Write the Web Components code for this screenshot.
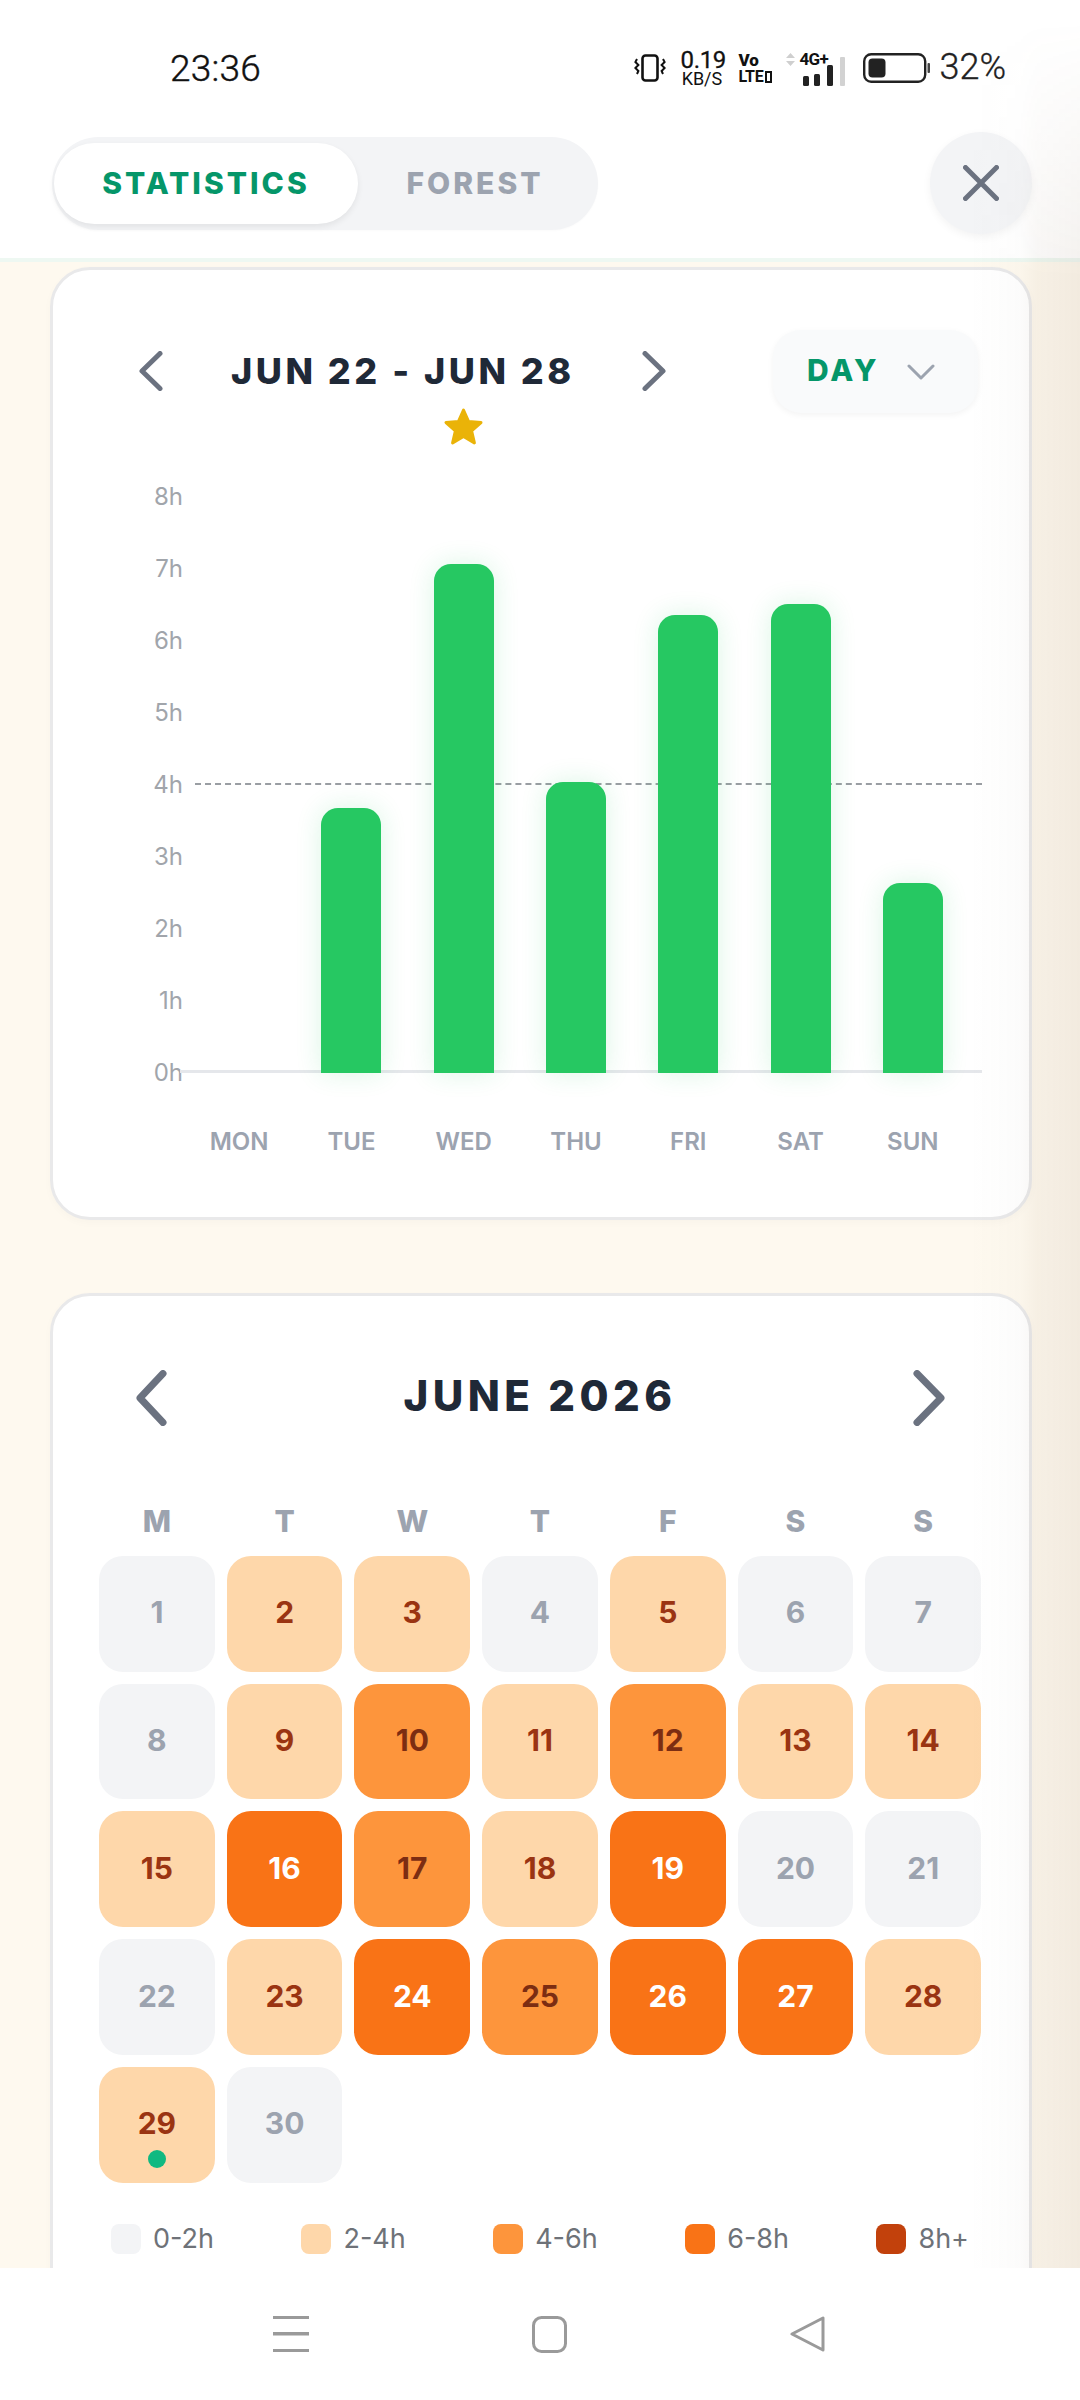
<!DOCTYPE html>
<html lang="en"><head><meta charset="utf-8"><title>Statistics</title>
<style>
html,body{margin:0;padding:0;background:#fff}
body{font-family:Inter,"Liberation Sans",sans-serif}
</style></head>
<body>
<app-shell>
  <status-bar slot="top"></status-bar>
  <top-tabs slot="top"></top-tabs>
  <stat-card><week-chart></week-chart></stat-card>
  <stat-card gap><month-calendar></month-calendar></stat-card>
  <nav-bar slot="bottom"></nav-bar>
</app-shell>
<script>
function def(name, css, html, init){
  customElements.define(name, class extends HTMLElement{
    connectedCallback(){
      if(this.shadowRoot) return;
      const r=this.attachShadow({mode:'open'});
      const h=typeof html==='function'?html(this):html;
      r.innerHTML='<style>'+css+'</style>'+h;
      if(init) init(r,this);
    }
  });
}
const chev=(dir,w,h,sw)=>`<svg width="${w}" height="${h}" viewBox="0 0 ${w} ${h}" fill="none" stroke="#6b7280" stroke-width="${sw}" stroke-linecap="round" stroke-linejoin="round"><path d="${dir==='l'?`M${w-sw/2-.5} ${sw/2}L${sw/2+.5} ${h/2}L${w-sw/2-.5} ${h-sw/2}`:`M${sw/2+.5} ${sw/2}L${w-sw/2-.5} ${h/2}L${sw/2+.5} ${h-sw/2}`}"/></svg>`;

def('app-shell',`
:host{display:block;width:1080px;height:2400px;position:relative;overflow:hidden;background:#fff}
.wrap{display:flex;flex-direction:column;height:2400px}
header{background:#fff;border-bottom:4px solid #eef8f2;height:258px;flex:none}
main{flex:1;min-height:0;overflow:hidden;background:#fef9ef;padding:5px 48px 0 50px}
.shade{position:absolute;top:0;right:0;width:110px;height:2268px;pointer-events:none;
 background:linear-gradient(to right,rgba(120,110,100,0) 0,rgba(120,110,100,.025) 45%,rgba(120,90,60,.06) 62%,rgba(120,90,60,.085) 100%);
 -webkit-mask-image:linear-gradient(to bottom,transparent 20px,#000 280px);mask-image:linear-gradient(to bottom,transparent 20px,#000 280px)}
footer{flex:none}
`,`<div class="wrap"><header><slot name="top"></slot></header><main><slot></slot></main><footer><slot name="bottom"></slot></footer></div><div class="shade"></div>`);

def('status-bar',`
:host{display:flex;height:130px;box-sizing:border-box;padding:0 74px 0 170px;justify-content:space-between;align-items:flex-start;color:#111;font-family:Roboto,"Liberation Sans",sans-serif}
.time{font-size:37px;line-height:40px;margin-top:49px;letter-spacing:.2px;font-weight:300;-webkit-text-stroke:.4px #111}
.r{display:flex;align-items:flex-start;margin-top:49px}
svg{display:block}
.net{margin-left:14px;width:43px;text-align:center}
.net b{display:block;font-weight:400;font-size:24px;line-height:22px;letter-spacing:-.3px;-webkit-text-stroke:.3px #111}
.net i{display:block;font-style:normal;font-weight:400;font-size:18px;line-height:16px;letter-spacing:-.1px}
.vo{margin-left:15px;width:34px;font-weight:700;margin-top:3px}
.vo b{display:block;font-size:17px;line-height:17px}
.vo span{display:flex;align-items:center;gap:2px;font-weight:700;font-size:16px;line-height:15px;letter-spacing:-.3px}
.vo span u{display:block;width:7px;height:12px;border:2.500px solid #111;box-sizing:border-box}
.sig{margin-left:14px;position:relative;width:59px;height:33px;margin-top:4px}
.sig b{position:absolute;left:13px;top:-3px;font-size:17px;line-height:18px;font-weight:700;letter-spacing:-.6px}
.bat{margin-left:18px;margin-top:4px}
.pct{margin-left:9px;font-size:36px;line-height:38px;color:#222;font-weight:300;margin-top:-1px;-webkit-text-stroke:.3px #222}
`,`<span class="time">23:36</span>
<div class="r">
<svg width="32" height="28" viewBox="0 0 32 28" style="margin-top:5px" fill="none" stroke="#111"><rect x="8.500" y="1.500" width="15" height="25" rx="3" stroke-width="2.600"/><path d="M3 5l-1.600 3 3 3-3 3 3 3-1.400 3M29 5l1.600 3-3 3 3 3-3 3 1.400 3" stroke-width="2"/></svg>
<div class="net"><b>0.19</b><i>KB/S</i></div>
<div class="vo"><b>Vo</b><span>LTE<u></u></span></div>
<div class="sig"><svg width="59" height="33" viewBox="0 0 59 33" style="position:absolute;left:0;top:0"><path d="M4.500 0l4.500 5H0zM4.500 13l4.500-5H0z" fill="#cfcfcf"/><rect x="17" y="23" width="6" height="10" rx="1.500" fill="#222"/><rect x="28" y="21" width="6" height="12" rx="1.500" fill="#222"/><rect x="41" y="12" width="6" height="21" rx="1.500" fill="#222"/><rect x="54" y="4" width="5" height="29" rx="1" fill="#d2d2d2"/></svg><b>4G+</b></div>
<svg class="bat" width="67" height="30" viewBox="0 0 67 30" fill="none"><rect x="1.200" y="1.200" width="61" height="27.600" rx="7" stroke="#222" stroke-width="2.400"/><rect x="5.500" y="5.500" width="17" height="19" rx="4" fill="#222"/><rect x="64.500" y="10" width="2.500" height="10" rx="1" fill="#444"/></svg>
<span class="pct">32%</span>
</div>`);

def('top-tabs',`
:host{display:flex;justify-content:space-between;align-items:center;height:106px;padding:0 48px 0 52px}
.pill{display:flex;width:546px;height:93px;box-sizing:border-box;padding:6px 6px 6px 2px;border-radius:47px;background:#f3f4f6;box-shadow:0 1px 2px rgba(0,0,0,.02)}
.t{display:flex;align-items:center;justify-content:center;font-weight:800;font-size:30px;letter-spacing:3px;color:#9ca3af;border-radius:41px}
.a{width:304px;background:#fff;color:#059669;box-shadow:0 3px 6px rgba(0,0,0,.07)}
.b{width:234px}
.x{width:102px;height:102px;border-radius:50%;background:#f3f4f6;display:flex;align-items:center;justify-content:center;box-shadow:0 3px 8px rgba(0,0,0,.05)}
svg{display:block}
`,`<div class="pill"><span class="t a">STATISTICS</span><span class="t b">FOREST</span></div>
<div class="x"><svg width="36" height="36" viewBox="0 0 36 36" fill="none" stroke="#6b7280" stroke-width="5" stroke-linecap="round"><path d="M2.500 2.500l31 31M33.500 2.500l-31 31"/></svg></div>`);

def('stat-card',`
:host{display:block;box-sizing:border-box;width:982px;background:#fff;border:3px solid #e9e9ea;border-radius:40px;box-shadow:0 3px 8px rgba(0,0,0,.025)}
:host([gap]){margin-top:73px}
`,`<slot></slot>`);

const Y=[8,7,6,5,4,3,2,1,0];
const D=[['MON',0],['TUE',265],['WED',509],['THU',291],['FRI',458],['SAT',469],['SUN',190]];
def('week-chart',`
:host{display:block;padding:58px 47px 60px 0;color:#1f2937}
.head{display:flex;align-items:flex-start;padding-left:86px}
.chev{margin-top:23px;flex:none}
svg{display:block}
.mid{width:339px;margin:22px 68px 0;display:flex;flex-direction:column;align-items:flex-start}
.ttl{font-weight:800;font-size:36px;line-height:42px;letter-spacing:3.500px;white-space:nowrap}
.star{margin:15px 0 0 212px}
.day{margin:2px 4px 0 auto;width:205px;height:83px;box-sizing:border-box;border-radius:28px;background:#f9fafb;display:flex;align-items:center;padding-left:34px;gap:27px;color:#059669;font-weight:800;font-size:30px;letter-spacing:3px;box-shadow:0 2px 6px rgba(0,0,0,.05)}
.day span{margin-top:-4px}
.body{display:flex;margin-top:15px}
.y{width:130px;flex:none;display:flex;flex-direction:column;height:648px;align-items:flex-end;color:#a1a5ab;font-size:24px}
.y span{height:72px;display:flex;align-items:center}
.right{flex:1}
.plot{position:relative;height:612px;padding-right:13px}
.base{position:absolute;left:-3px;right:0;bottom:-1px;height:3px;background:#e5e7eb}
.dash{position:absolute;left:12px;right:0;top:323px;height:0;border-top:2px dashed #9a9ea3}
.bars{position:relative;display:grid;grid-template-columns:repeat(7,1fr);height:613px;align-items:end;justify-items:center}
.bar{width:60px;background:#26c862;border-radius:17px 17px 0 0;box-shadow:0 0 26px rgba(34,197,94,.16)}
.xl{display:grid;grid-template-columns:repeat(7,1fr);margin:55px 13px 0 0;color:#9ca3af;font-size:24px;font-weight:600;line-height:30px;justify-items:center}
`,`<div class="head">
<span class="chev">${chev('l',24,40,5)}</span>
<div class="mid"><div class="ttl">JUN 22 - JUN 28</div>
<svg class="star" width="41" height="38" viewBox="0 0 41 38"><path d="M20.500 3l5 11.400 12.500 1.200-9.400 8.200 2.800 12.100-10.900-6.400-10.900 6.400 2.800-12.100L3 15.600l12.500-1.200z" fill="#eab308" stroke="#eab308" stroke-width="3" stroke-linejoin="round"/></svg></div>
<span class="chev" style="margin-left:4px">${chev('r',24,40,5)}</span>
<div class="day"><span>DAY</span><svg width="28" height="16" viewBox="0 0 28 16" fill="none" stroke="#9ca3af" stroke-width="3" stroke-linecap="round" stroke-linejoin="round"><path d="M2 2l12 12L26 2"/></svg></div>
</div>
<div class="body">
<div class="y">${Y.map(n=>`<span>${n}h</span>`).join('')}</div>
<div class="right">
<div class="plot"><div class="base"></div><div class="dash"></div>
<div class="bars">${D.map(d=>d[1]?`<div class="bar" style="height:${d[1]}px"></div>`:'<div></div>').join('')}</div></div>
<div class="xl">${D.map(d=>`<span>${d[0]}</span>`).join('')}</div>
</div></div>`);

const L=[0,1,1,0,1,0,0,0,1,2,1,2,1,1,1,3,2,1,3,0,0,0,1,3,2,3,3,1,1,0];
const BG=['#f3f4f6','#fed7aa','#fd953c','#f97316','#c2410c'];
const FG=['#9ca3af','#9a3412','#7c2d12','#fff','#fff'];
def('cal-day',`
:host{display:flex;position:relative;aspect-ratio:1;align-items:center;justify-content:center;border-radius:24px;font-weight:700;font-size:30px;padding-bottom:3px;box-sizing:border-box}
.dot{position:absolute;left:50%;bottom:15px;width:18px;height:18px;margin-left:-9px;border-radius:50%;background:#10b981}
`,e=>`<slot></slot>${e.hasAttribute('today')?'<span class="dot"></span>':''}`,(r,e)=>{const l=+e.getAttribute('level');e.style.background=BG[l];e.style.color=FG[l];});

def('legend-item',`
:host{display:flex;align-items:center;gap:12px;font-size:27px;line-height:32px;color:#6e7278}
i{display:block;width:30px;height:30px;border-radius:8px}
`,e=>`<i style="background:${e.getAttribute('color')}"></i><slot></slot>`);

def('month-calendar',`
:host{display:block;padding:74px 48px 60px 46px}
.head{display:flex;justify-content:space-between;align-items:center;padding:0 36px 0 37px;height:56px}
svg{display:block}
.ttl{font-weight:800;font-size:42px;letter-spacing:4.500px;color:#1f2937;line-height:56px;margin-top:-4px}
.wk{display:grid;grid-template-columns:repeat(7,1fr);gap:12px;margin:77px 0 17px;font-weight:800;font-size:30px;line-height:36px;color:#9ca3af;text-align:center}
.g{display:grid;grid-template-columns:repeat(7,1fr);gap:12px}
.lg{display:flex;justify-content:space-between;margin-top:40px;padding:0 12px 0 12px}
`,`<div class="head">${chev('l',31,56,7)}<span class="ttl">JUNE 2026</span>${chev('r',32,56,7)}</div>
<div class="wk">${['M','T','W','T','F','S','S'].map(x=>`<span>${x}</span>`).join('')}</div>
<div class="g">${L.map((l,i)=>`<cal-day level="${l}"${i===28?' today':''}>${i+1}</cal-day>`).join('')}</div>
<div class="lg"><legend-item color="#f3f4f6">0-2h</legend-item><legend-item color="#fed7aa">2-4h</legend-item><legend-item color="#fd953c">4-6h</legend-item><legend-item color="#f97316">6-8h</legend-item><legend-item color="#c2410c">8h+</legend-item></div>`);

def('nav-bar',`
:host{display:flex;position:relative;z-index:2;height:132px;background:#fff;justify-content:center;align-items:center;padding-left:18px;box-sizing:border-box}
span{width:258px;display:flex;justify-content:center}
svg{display:block}
`,`<span><svg width="36" height="36" viewBox="0 0 36 36" fill="#9a9a9a"><rect y="0" width="36" height="3"/><rect y="16" width="36" height="3.500"/><rect y="33" width="36" height="3"/></svg></span>
<span><svg width="35" height="37" viewBox="0 0 35 37" fill="none" stroke="#9a9a9a" stroke-width="3"><rect x="1.500" y="1.500" width="32" height="34" rx="8"/></svg></span>
<span><svg width="35" height="36" viewBox="0 0 35 36" fill="none" stroke="#9a9a9a" stroke-width="3" stroke-linejoin="round"><path d="M33 2v32L2 18z"/></svg></span>`);
</script>
</body></html>
